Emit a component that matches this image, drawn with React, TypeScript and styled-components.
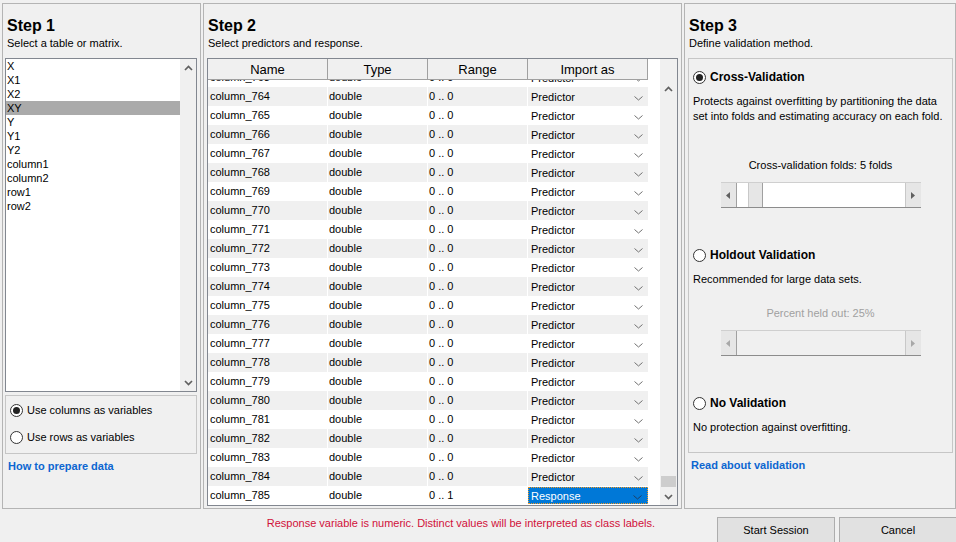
import React from 'react'
import styled, { createGlobalStyle } from 'styled-components'

const GlobalStyle = createGlobalStyle`
  html, body { margin: 0; padding: 0; background: #f0f0f0; }
  body {
    font-family: "Liberation Sans", Arial, sans-serif;
    font-size: 11px;
    color: #000;
  }
  * { box-sizing: border-box; }
`

const Window = styled.div`
  width: 956px;
  height: 542px;
  overflow: hidden;
  background: #f0f0f0;
  display: flex;
  flex-direction: column;
`

const Steps = styled.div`
  display: flex;
  gap: 2px;
  padding: 3px 0 0 2px;
  height: 509px;
`

const Panel = styled.section<{ $w: number }>`
  width: ${p => p.$w}px;
  height: 506px;
  border: 1px solid #b4b4b4;
  display: flex;
  flex-direction: column;
`

const PanelHead = styled.div`
  height: 54px;
  padding: 12px 0 0 4px;
`

const Title = styled.h2`
  margin: 0;
  font-size: 16px;
  line-height: 20px;
  font-weight: bold;
`

const Subtitle = styled.div`
  line-height: 14px;
`

/* ---------- step 1 ---------- */

const ListBox = styled.div`
  margin: 0 3px 0 2px;
  height: 334px;
  border: 1px solid #828790;
  background: #fff;
  display: flex;
`

const ListItems = styled.div`
  flex: 1;
`

const ListItem = styled.div<{ $selected?: boolean }>`
  height: 14px;
  line-height: 15px;
  padding-left: 1px;
  background: ${p => (p.$selected ? '#aaaaaa' : 'transparent')};
`

const ScrollTrack = styled.div<{ $w: number }>`
  width: ${p => p.$w}px;
  background: #f0f0f0;
  display: flex;
  flex-direction: column;
  align-items: center;
`

const ArrowBox = styled.div`
  height: 17px;
  width: 100%;
  display: flex;
  align-items: center;
  justify-content: center;
`

const Spacer = styled.div<{ $h?: number }>`
  ${p => (p.$h ? `height: ${p.$h}px;` : 'flex: 1;')}
`

const Thumb = styled.div`
  width: 15px;
  height: 11px;
  background: #cdcdcd;
  margin-bottom: 1px;
`

const GroupBox = styled.div<{ $h: number }>`
  height: ${p => p.$h}px;
  border: 1px solid #c6c6c6;
  display: flex;
  flex-direction: column;
`

const VarsBox = styled(GroupBox)`
  margin: 3px 3px 0 2px;
  padding: 7px 0 0 4px;
  gap: 13px;
`

const RadioRow = styled.label`
  display: flex;
  align-items: center;
  gap: 4px;
  height: 14px;
  line-height: 14px;
`

const RadioDot = styled.span<{ $on?: boolean }>`
  width: 13px;
  height: 13px;
  border-radius: 50%;
  border: 1px solid #333;
  background: #fff;
  display: flex;
  align-items: center;
  justify-content: center;
  &::after {
    content: '';
    width: 7px;
    height: 7px;
    border-radius: 50%;
    background: ${p => (p.$on ? '#222' : 'transparent')};
  }
`

const RadioLabel = styled.span<{ $bold?: boolean }>`
  font-weight: ${p => (p.$bold ? 'bold' : 'normal')};
  font-size: ${p => (p.$bold ? '12px' : '11px')};
`

const HelpLink = styled.a<{ $indent: number }>`
  display: block;
  margin: 5px 0 0 ${p => p.$indent}px;
  line-height: 14px;
  font-weight: bold;
  color: #0c66d1;
  text-decoration: none;
`

/* ---------- step 2 ---------- */

const Table = styled.div`
  margin: 0 3px;
  height: 448px;
  border: 1px solid #828790;
  background: #fff;
  display: flex;
`

const TableMain = styled.div`
  width: 452px;
  display: flex;
  flex-direction: column;
`

const HeaderRow = styled.div`
  display: flex;
  width: 440px;
  height: 21px;
  border-bottom: 1px solid #a0a0a0;
  background: #f0f0f0;
  position: relative;
  z-index: 1;
`

const HeaderCell = styled.div<{ $w: number }>`
  width: ${p => p.$w}px;
  border-right: 1px solid #a0a0a0;
  text-align: center;
  font-size: 13px;
  line-height: 22px;
`

const Body = styled.div`
  flex: 1;
  overflow: hidden;
`

const Rows = styled.div`
  margin-top: -12px;
`

const Row = styled.div<{ $alt: boolean }>`
  display: flex;
  width: 440px;
  height: 19px;
  background: ${p => (p.$alt ? '#f0f0f0' : '#fff')};
`

const Cell = styled.div<{ $w: number; $pad?: number }>`
  width: ${p => p.$w}px;
  border-right: 1px solid #fff;
  padding-left: ${p => p.$pad ?? 2}px;
  line-height: 19px;
  white-space: nowrap;
  overflow: hidden;
`

const ImportCell = styled.div`
  width: 120px;
  display: flex;
  align-items: center;
`

const Choice = styled.div<{ $selected?: boolean }>`
  width: 120px;
  height: 17px;
  display: flex;
  align-items: center;
  justify-content: space-between;
  padding: 0 5px 0 ${p => (p.$selected ? 2 : 3)}px;
  background: ${p => (p.$selected ? '#0078d7' : 'transparent')};
  color: ${p => (p.$selected ? '#fff' : '#000')};
  border: ${p => (p.$selected ? '1px dotted #f59a23' : 'none')};
`

/* ---------- step 3 ---------- */

const ValidationBox = styled(GroupBox)`
  margin: 0 2px 0 3px;
`

const Option = styled.div<{ $top: number; $center?: boolean; $muted?: boolean; $lh?: number }>`
  margin-top: ${p => p.$top}px;
  padding-left: ${p => (p.$center ? 0 : 4)}px;
  line-height: ${p => p.$lh ?? 14}px;
  text-align: ${p => (p.$center ? 'center' : 'left')};
  color: ${p => (p.$muted ? '#a0a0a0' : '#000')};
  align-self: ${p => (p.$center ? 'center' : 'stretch')};
`

const Slider = styled.div<{ $disabled?: boolean }>`
  width: 200px;
  height: 26px;
  display: flex;
  border-top: 1px solid #cfcfcf;
  border-bottom: 1px solid #8c8c8c;
  background: ${p => (p.$disabled ? '#f0f0f0' : '#fff')};
`

const SliderButton = styled.div`
  width: 16px;
  background: #e6e6e6;
  border-right: 1px solid #a0a0a0;
  display: flex;
  align-items: center;
  justify-content: center;
  &:last-child {
    border-right: none;
    border-left: 1px solid #c8c8c8;
  }
`

const SliderTrack = styled.div`
  flex: 1;
  display: flex;
  padding-left: 11px;
`

const SliderThumb = styled.div`
  width: 15px;
  background: #e6e6e6;
  border-right: 1px solid #a0a0a0;
  border-left: 1px solid #c8c8c8;
`

/* ---------- footer ---------- */

const Footer = styled.div`
  flex: 1;
  display: flex;
  align-items: flex-start;
  padding-top: 8px;
`

const Message = styled.div`
  flex: 1;
  text-align: right;
  padding: 0 62px 0 0;
  margin-top: -1px;
  line-height: 14px;
  color: #d0103a;
`

const Buttons = styled.div`
  display: flex;
  gap: 4px;
  margin-right: -1px;
`

const Button = styled.button`
  width: 118px;
  height: 27px;
  padding: 0 0 2px;
  background: #e1e1e1;
  border: 1px solid #adadad;
  font-family: inherit;
  font-size: 11px;
  color: #000;
`

const Chevron = ({ up, color = '#606060' }: { up?: boolean; color?: string }) => (
  <svg width="9" height="6" viewBox="0 0 9 6">
    <polyline
      points={up ? '1,5 4.5,1.5 8,5' : '1,1 4.5,4.5 8,1'}
      fill="none"
      stroke={color}
      strokeWidth="1.7"
    />
  </svg>
)

const DropChevron = ({ color = '#707070' }: { color?: string }) => (
  <svg width="9" height="7" viewBox="0 0 9 7" style={{ marginTop: 4 }}>
    <polyline points="0.5,1.5 4.5,5 8.5,1.5" fill="none" stroke={color} strokeWidth="1" />
  </svg>
)

const Tri = ({ dir, color }: { dir: 'l' | 'r'; color: string }) => (
  <svg width="4" height="7" viewBox="0 0 4 7">
    <polygon points={dir === 'l' ? '4,0 0,3.5 4,7' : '0,0 4,3.5 0,7'} fill={color} />
  </svg>
)

const variables = ['X', 'X1', 'X2', 'XY', 'Y', 'Y1', 'Y2', 'column1', 'column2', 'row1', 'row2']
const rows = Array.from({ length: 23 }, (_, i) => 763 + i)

const SliderBar = ({ disabled }: { disabled?: boolean }) => {
  const c = disabled ? '#a8a8a8' : '#606060'
  return (
    <Slider $disabled={disabled}>
      <SliderButton><Tri dir="l" color={c} /></SliderButton>
      <SliderTrack>{!disabled && <SliderThumb />}</SliderTrack>
      <SliderButton><Tri dir="r" color={c} /></SliderButton>
    </Slider>
  )
}

export default function App() {
  return (
    <Window>
      <GlobalStyle />
      <Steps>
        {/* Step 1 */}
        <Panel $w={199}>
          <PanelHead>
            <Title>Step 1</Title>
            <Subtitle>Select a table or matrix.</Subtitle>
          </PanelHead>
          <ListBox>
            <ListItems>
              {variables.map(v => (
                <ListItem key={v} $selected={v === 'XY'}>{v}</ListItem>
              ))}
            </ListItems>
            <ScrollTrack $w={16}>
              <ArrowBox><Chevron up /></ArrowBox>
              <Spacer />
              <ArrowBox><Chevron /></ArrowBox>
            </ScrollTrack>
          </ListBox>
          <VarsBox $h={59}>
            <RadioRow><RadioDot $on /><RadioLabel>Use columns as variables</RadioLabel></RadioRow>
            <RadioRow><RadioDot /><RadioLabel>Use rows as variables</RadioLabel></RadioRow>
          </VarsBox>
          <HelpLink $indent={5}>How to prepare data</HelpLink>
        </Panel>

        {/* Step 2 */}
        <Panel $w={479}>
          <PanelHead>
            <Title>Step 2</Title>
            <Subtitle>Select predictors and response.</Subtitle>
          </PanelHead>
          <Table>
            <TableMain>
              <HeaderRow>
                <HeaderCell $w={120}>Name</HeaderCell>
                <HeaderCell $w={100}>Type</HeaderCell>
                <HeaderCell $w={100}>Range</HeaderCell>
                <HeaderCell $w={120}>Import as</HeaderCell>
              </HeaderRow>
              <Body>
                <Rows>
                  {rows.map(n => {
                    const response = n === 785
                    return (
                      <Row key={n} $alt={n % 2 === 0}>
                        <Cell $w={120}>column_{n}</Cell>
                        <Cell $w={100} $pad={1}>double</Cell>
                        <Cell $w={100} $pad={1}>{response ? '0 .. 1' : '0 .. 0'}</Cell>
                        <ImportCell>
                          <Choice $selected={response}>
                            <span>{response ? 'Response' : 'Predictor'}</span>
                            <DropChevron color={response ? '#1c3f66' : '#707070'} />
                          </Choice>
                        </ImportCell>
                      </Row>
                    )
                  })}
                </Rows>
              </Body>
            </TableMain>
            <ScrollTrack $w={17}>
              <Spacer $h={21} />
              <ArrowBox><Chevron up /></ArrowBox>
              <Spacer />
              <Thumb />
              <ArrowBox><Chevron /></ArrowBox>
            </ScrollTrack>
          </Table>
        </Panel>

        {/* Step 3 */}
        <Panel $w={272}>
          <PanelHead>
            <Title>Step 3</Title>
            <Subtitle>Define validation method.</Subtitle>
          </PanelHead>
          <ValidationBox $h={395}>
            <Option $top={11}>
              <RadioRow><RadioDot $on /><RadioLabel $bold>Cross-Validation</RadioLabel></RadioRow>
            </Option>
            <Option $top={10} $lh={15}>
              Protects against overfitting by partitioning the data<br />
              set into folds and estimating accuracy on each fold.
            </Option>
            <Option $top={34} $center>Cross-validation folds: 5 folds</Option>
            <Option $top={10} $center><SliderBar /></Option>
            <Option $top={40}>
              <RadioRow><RadioDot /><RadioLabel $bold>Holdout Validation</RadioLabel></RadioRow>
            </Option>
            <Option $top={10}>Recommended for large data sets.</Option>
            <Option $top={20} $center $muted>Percent held out: 25%</Option>
            <Option $top={10} $center><SliderBar disabled /></Option>
            <Option $top={40}>
              <RadioRow><RadioDot /><RadioLabel $bold>No Validation</RadioLabel></RadioRow>
            </Option>
            <Option $top={10}>No protection against overfitting.</Option>
          </ValidationBox>
          <HelpLink $indent={6}>Read about validation</HelpLink>
        </Panel>
      </Steps>

      <Footer>
        <Message>Response variable is numeric. Distinct values will be interpreted as class labels.</Message>
        <Buttons>
          <Button>Start Session</Button>
          <Button>Cancel</Button>
        </Buttons>
      </Footer>
    </Window>
  )
}
